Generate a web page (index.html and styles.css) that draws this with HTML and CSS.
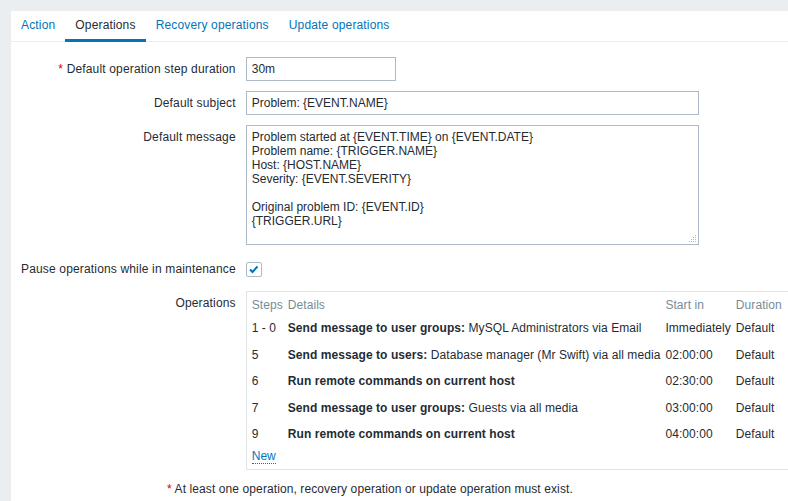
FILE: index.html
```html
<!DOCTYPE html>
<html>
<head>
<meta charset="utf-8">
<link rel="stylesheet" href="styles.css">
</head>
<body>
<div class="panel">
  <ul class="tabs">
    <li class="tab"><a>Action</a></li>
    <li class="tab active"><a>Operations</a></li>
    <li class="tab"><a>Recovery operations</a></li>
    <li class="tab"><a>Update operations</a></li>
  </ul>
  <div class="form">
    <div class="grid">
      <div class="lbl"><span class="ast">*</span> Default operation step duration</div>
      <div class="field"><div class="input small">30m</div></div>

      <div class="lbl">Default subject</div>
      <div class="field"><div class="input wide">Problem: {EVENT.NAME}</div></div>

      <div class="lbl">Default message</div>
      <div class="field">
        <div class="textarea-wrap">
          <div class="textarea">Problem started at {EVENT.TIME} on {EVENT.DATE}
Problem name: {TRIGGER.NAME}
Host: {HOST.NAME}
Severity: {EVENT.SEVERITY}

Original problem ID: {EVENT.ID}
{TRIGGER.URL}</div>
          <svg class="grip" width="8" height="8" viewBox="0 0 8 8">
            <rect x="6" y="0" width="1" height="1" fill="#b8b8b8"/>
            <rect x="4" y="2" width="1" height="1" fill="#b8b8b8"/>
            <rect x="6" y="2" width="1" height="1" fill="#b8b8b8"/>
            <rect x="2" y="4" width="1" height="1" fill="#b8b8b8"/>
            <rect x="4" y="4" width="1" height="1" fill="#b8b8b8"/>
            <rect x="6" y="4" width="1" height="1" fill="#b8b8b8"/>
            <rect x="0" y="6" width="1" height="1" fill="#b8b8b8"/>
            <rect x="2" y="6" width="1" height="1" fill="#b8b8b8"/>
            <rect x="4" y="6" width="1" height="1" fill="#b8b8b8"/>
            <rect x="6" y="6" width="1" height="1" fill="#b8b8b8"/>
          </svg>
        </div>
      </div>

      <div class="lbl">Pause operations while in maintenance</div>
      <div class="field center">
        <span class="checkbox">
          <svg width="13" height="13" viewBox="0 0 13 13"><path d="M3 6.5 L5.5 9 L10.5 3.5" fill="none" stroke="#0275b8" stroke-width="2"/></svg>
        </span>
      </div>

      <div class="lbl">Operations</div>
      <div class="field">
        <div class="ops">
          <table class="ops-table">
            <thead>
              <tr><th>Steps</th><th>Details</th><th>Start in</th><th>Duration</th></tr>
            </thead>
            <tbody>
              <tr><td>1 - 0</td><td><b>Send message to user groups:</b> MySQL Administrators via Email</td><td>Immediately</td><td>Default</td></tr>
              <tr><td>5</td><td><b>Send message to users:</b> Database manager (Mr Swift) via all media</td><td>02:00:00</td><td>Default</td></tr>
              <tr><td>6</td><td><b>Run remote commands on current host</b></td><td>02:30:00</td><td>Default</td></tr>
              <tr><td>7</td><td><b>Send message to user groups:</b> Guests via all media</td><td>03:00:00</td><td>Default</td></tr>
              <tr><td>9</td><td><b>Run remote commands on current host</b></td><td>04:00:00</td><td>Default</td></tr>
            </tbody>
          </table>
          <div class="new-row"><a class="link">New</a></div>
        </div>
      </div>
    </div>
    <div class="footnote"><span class="ast">*</span> At least one operation, recovery operation or update operation must exist.</div>
  </div>
</div>
</body>
</html>
```
FILE: styles.css
```css
html, body {
  margin: 0;
  padding: 0;
  background: #ebeef0;
  overflow: hidden;
  font-family: "Liberation Sans", Arial, sans-serif;
  font-size: 12px;
  color: #1f2c33;
}

.panel {
  margin: 11px 0 0 11px;
  width: 1000px;
  height: 600px;
  background: #ffffff;
}

.tabs {
  list-style: none;
  margin: 0;
  padding: 0;
  display: flex;
  border-bottom: 1px solid #ebeef0;
  letter-spacing: 0.16px;
}

.tab {
  padding: 1px 10px 0 10px;
  line-height: 27px;
  border-bottom: 3px solid transparent;
  margin-bottom: -1px;
}

.tab a {
  color: #0275b8;
}

.tab.active {
  border-bottom-color: #0275b8;
}

.tab.active a {
  color: #1f2c33;
}

.form {
  padding: 15px 0 0 10px;
}

.grid {
  display: grid;
  grid-template-columns: max-content 1fr;
  column-gap: 10px;
  row-gap: 10px;
}

.lbl {
  text-align: right;
  line-height: 24px;
  letter-spacing: 0.16px;
}

.ast {
  color: #d40000;
}

.field {
  display: flex;
  align-items: flex-start;
}

.field.center {
  align-items: center;
  height: 24px;
}

.input {
  box-sizing: border-box;
  height: 24px;
  border: 1px solid #acbbc7;
  padding: 0 5px;
  line-height: 22px;
  background: #fff;
  white-space: nowrap;
}

.input.small {
  width: 150px;
}

.input.wide {
  width: 453px;
}

.textarea-wrap {
  position: relative;
  margin-bottom: 2px;
}

.textarea {
  box-sizing: border-box;
  width: 453px;
  height: 120px;
  border: 1px solid #acbbc7;
  padding: 4px 5px;
  line-height: 14px;
  white-space: pre;
}

.grip {
  position: absolute;
  right: 2px;
  bottom: 2px;
  display: block;
}

.checkbox {
  box-sizing: border-box;
  width: 16px;
  height: 15px;
  border: 1px solid #acbbc7;
  border-radius: 2px;
  display: flex;
  align-items: center;
  justify-content: center;
  margin-top: 1px;
}

.checkbox svg {
  display: block;
}

.ops {
  box-sizing: border-box;
  width: 600px;
  border: 1px solid #dfe4e7;
  padding: 6px 5px 6px 5px;
}

.ops-table {
  border-collapse: collapse;
  white-space: nowrap;
  letter-spacing: 0.07px;
}

.ops-table th {
  text-align: left;
  font-weight: normal;
  color: #768d99;
  padding: 0 5px 3px 0;
  line-height: 14px;
}

.ops-table td {
  padding: 6px 5px 6.5px 0;
  line-height: 14px;
}

.ops-table b {
  font-weight: bold;
}

.new-row {
  padding-top: 1.5px;
  line-height: 14px;
}

.link {
  color: #0275b8;
  border-bottom: 1px dotted #0275b8;
}

.footnote {
  padding: 12px 0 0 146px;
  line-height: 14px;
  letter-spacing: 0.1px;
}
```
